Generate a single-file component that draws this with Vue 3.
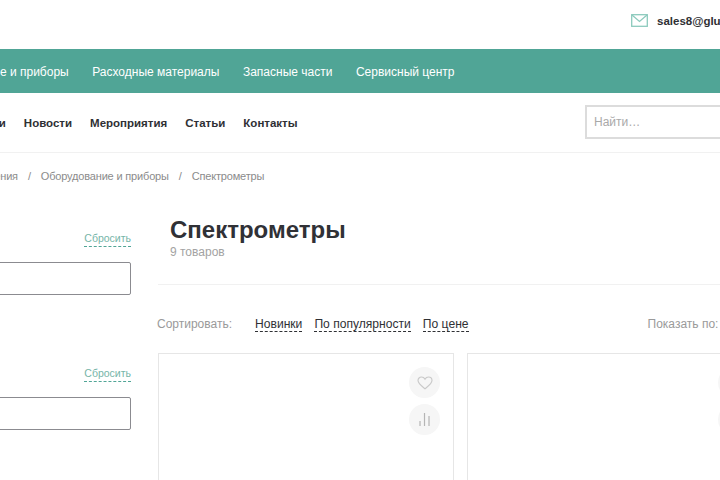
<script setup>
const teal = ['Оборудование и приборы', 'Расходные материалы', 'Запасные части', 'Сервисный центр']
const links = ['Компании', 'Новости', 'Мероприятия', 'Статьи', 'Контакты']
const crumbs = ['Решения', 'Оборудование и приборы', 'Спектрометры']
const sorts = ['Новинки', 'По популярности', 'По цене']
const filters = [0, 1]
const cards = [0, 1]
</script>

<template>
  <div class="page">
    <header class="top">
      <svg class="mail" width="17" height="13" viewBox="0 0 17 13" fill="none" stroke="#8ccabd" stroke-width="1.3">
        <rect x="0.7" y="0.7" width="15.6" height="11.6" />
        <path d="M1 1l7.5 6.5L16 1" />
      </svg>
      <span class="email">sales8@gluhov.ru</span>
    </header>

    <nav class="teal">
      <a v-for="t in teal" :key="t">{{ t }}</a>
    </nav>

    <div class="menu">
      <nav class="links">
        <a v-for="l in links" :key="l">{{ l }}</a>
      </nav>
      <div class="search">Найти…</div>
    </div>

    <div class="crumbs">
      <template v-for="(c, i) in crumbs" :key="c">
        <span>{{ c }}</span>
        <i v-if="i < crumbs.length - 1">/</i>
      </template>
    </div>

    <div class="main">
      <aside class="side">
        <section v-for="f in filters" :key="f" class="filter">
          <a class="reset">Сбросить</a>
          <div class="field"></div>
        </section>
      </aside>

      <div class="content">
        <div class="head">
          <h1>Спектрометры</h1>
          <p>9 товаров</p>
        </div>

        <div class="sort">
          <span class="label">Сортировать:</span>
          <a v-for="s in sorts" :key="s">{{ s }}</a>
          <span class="show">Показать по:</span>
        </div>

        <div class="cards">
          <article v-for="c in cards" :key="c" class="card">
            <span class="round">
              <svg width="16" height="14" viewBox="0 0 18 16" fill="none" stroke="#c9c9c9" stroke-width="1.3">
                <path d="M9 14.6C5 11.4 1 8.6 1 5.2 1 2.8 2.8 1.2 5 1.2c1.7 0 3.1.9 4 2.4.9-1.5 2.3-2.4 4-2.4 2.2 0 4 1.6 4 4 0 3.4-4 6.2-8 9.4z" />
              </svg>
            </span>
            <span class="round">
              <svg width="11" height="13" viewBox="0 0 11 13" fill="none" stroke="#b5b5b5" stroke-width="1.2">
                <path d="M1 8v5M5.5 0v13M10 3v10" />
              </svg>
            </span>
          </article>
        </div>
      </div>
    </div>
  </div>
</template>

<style scoped>
.page {
  width: 720px;
  height: 480px;
  overflow: hidden;
  background: #fff;
  font-family: "Liberation Sans", Arial, sans-serif;
  color: #2f3034;
  font-size: 12px;
}
.top {
  height: 49px;
  display: flex;
  align-items: center;
  gap: 9px;
  padding: 0 0 8px 631px;
  box-sizing: border-box;
  white-space: nowrap;
}
.mail { flex: none; }
.email { font-weight: 700; font-size: 11.5px; }
.teal {
  height: 44px;
  background: #50a596;
  display: flex;
  align-items: center;
  gap: 23.5px;
  margin-left: -75px;
  padding-top: 1px;
  box-sizing: border-box;
  color: #fff;
  white-space: nowrap;
}
.menu {
  height: 60px;
  display: flex;
  align-items: center;
  justify-content: space-between;
  border-bottom: 1px solid #f1f1f1;
  box-sizing: border-box;
  white-space: nowrap;
}
.links {
  display: flex;
  gap: 18px;
  margin-left: -51px;
  padding-top: 1px;
  font-weight: 700;
  font-size: 11.5px;
}
.search {
  width: 300px;
  height: 34px;
  margin-right: -166px;
  margin-top: -1px;
  border: 2px solid #dcdcdc;
  box-sizing: border-box;
  line-height: 30px;
  padding-left: 7px;
  color: #a9a9a9;
  transform: translateX(-1px);
}
.crumbs {
  display: flex;
  gap: 10px;
  height: 47px;
  padding-top: 17px;
  box-sizing: border-box;
  margin-left: -27px;
  font-size: 11px;
  letter-spacing: -0.17px;
  color: #8b8b8b;
  white-space: nowrap;
}
.crumbs i { font-style: normal; }
.main {
  display: flex;
  gap: 27px;
}
.side {
  width: 131px;
  flex: none;
}
.filter {
  display: flex;
  flex-direction: column;
  align-items: flex-end;
  height: 135px;
}
.reset {
  margin-top: 32px;
  font-size: 10.5px;
  line-height: 13px;
  color: #76b5a8;
  border-bottom: 1px dashed #50a596;
  padding-bottom: 1px;
}
.field {
  width: 160px;
  height: 33px;
  margin-top: 15px;
  border: 1px solid #8b8b90;
  border-radius: 2px;
  box-sizing: border-box;
}
.content {
  width: 700px;
  flex: none;
}
.head {
  height: 85px;
  padding: 15px 0 0 12px;
  border-bottom: 1px solid #f1f1f1;
  box-sizing: border-box;
}
.head h1 {
  margin: 0;
  font-size: 24px;
  line-height: 30px;
  font-weight: 700;
  color: #303136;
}
.head p {
  margin: 0;
  font-size: 12px;
  line-height: 14px;
  color: #a3a3a3;
}
.sort {
  height: 68px;
  display: flex;
  align-items: flex-start;
  padding-top: 32px;
  box-sizing: border-box;
  white-space: nowrap;
}
.sort .label { color: #9a9a9a; margin: 0 9px 0 -1px; width: 89px; }
.sort a {
  margin-right: 12px;
  line-height: 14px;
  font-size: 12.1px;
  border-bottom: 1px dashed #2f3034;
}
.sort .show {
  margin-left: 167px;
  color: #9a9a9a;
}
.cards {
  display: flex;
  gap: 13px;
}
.card {
  width: 296px;
  height: 200px;
  flex: none;
  border: 1px solid #e6e6e6;
  box-sizing: border-box;
  display: flex;
  flex-direction: column;
  align-items: flex-end;
  gap: 6px;
  padding: 13px 13px 0 0;
}
.round {
  width: 31px;
  height: 31px;
  border-radius: 50%;
  background: #f6f6f6;
  display: flex;
  align-items: center;
  justify-content: center;
}
</style>
